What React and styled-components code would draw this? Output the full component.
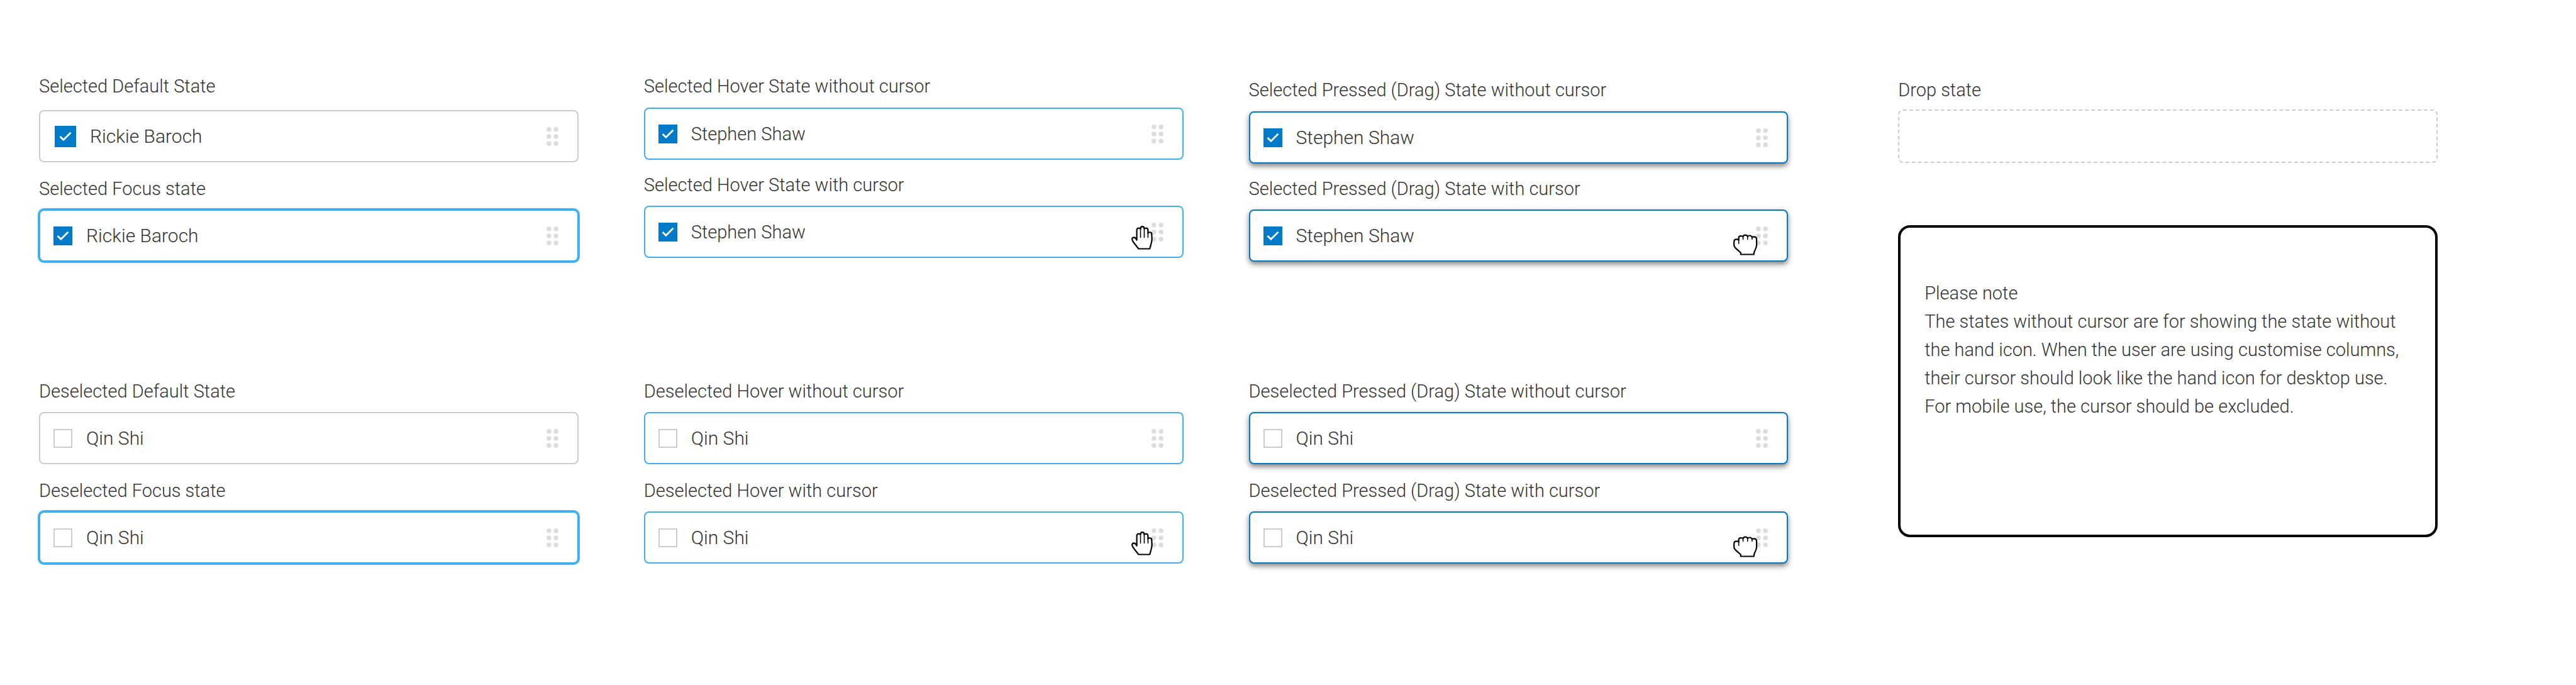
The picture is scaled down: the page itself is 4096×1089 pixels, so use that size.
import React, { useState } from "react";
import styled, { createGlobalStyle, css } from "styled-components";

const GlobalStyle = createGlobalStyle`
  * {
    box-sizing: border-box;
  }
  body {
    margin: 0;
    background-color: #fff;
    color: #333;
    font-family: Roboto, "Liberation Sans", sans-serif;
    font-size: 29px;
    font-weight: 350;
    line-height: 40px;
  }
`;

const Page = styled.main`
  display: flex;
  align-items: flex-start;
  gap: 175px;
  padding: 117px 220px 80px 62px;
`;
const States = styled.div`
  flex: 3 1 208px;
  display: grid;
  grid-template-columns: repeat(3, minmax(0, 1fr));
  column-gap: 104px;
  row-gap: 186px;
`;
const Aside = styled.aside`
  flex: 1 1 0;
  min-width: 0;
  padding-top: 6px;
`;
const Group = styled.section`
  display: flex;
  flex-direction: column;
  gap: ${(props) => props.$gap || 22}px;
  padding-top: ${(props) => (props.$lowered ? 6 : 0)}px;
`;
const StateField = styled.div`
  display: flex;
  flex-direction: column;
  gap: ${(props) => props.$gap || 13}px;
`;
const StateTitle = styled.h2`
  margin: 0;
  font-size: 29px;
  font-weight: 350;
  line-height: 40px;
`;

const borders = {
  default: css`
    border-color: #ccc;
  `,
  focus: css`
    border-color: #3fafef;
    box-shadow: 0 0 1px 2px #3fafef;
  `,
  hover: css`
    border-color: #3fafef;
  `,
  pressed: css`
    border-color: #007ac9;
    box-shadow: 0 4px 8px rgba(0, 0, 0, 0.5);
  `,
};

const Row = styled.div`
  position: relative;
  display: flex;
  align-items: center;
  height: 83px;
  padding: 0 30px 0 ${(props) => (props.$large ? 23 : 21)}px;
  border: 2px solid;
  border-radius: 8px;
  background-color: #fff;
  ${(props) => borders[props.$state]}
`;
const RowLabel = styled.label`
  flex: 1;
  display: flex;
  align-items: center;
  gap: 22px;
  font-size: ${(props) => (props.$small ? 29 : 30)}px;
`;
const CheckWrap = styled.span`
  display: grid;
  place-items: center;

  > * {
    grid-area: 1 / 1;
  }
`;
const CheckInput = styled.input`
  appearance: none;
  width: ${(props) => (props.$large ? 34 : 30)}px;
  height: ${(props) => (props.$large ? 34 : 30)}px;
  margin: 0;
  border: 2px solid #ccc;
  background-color: #fff;

  &:checked {
    border-color: #007ac9;
    background-color: #007ac9;
  }
`;
const TickIcon = styled.svg`
  width: 30px;
  height: 30px;
  pointer-events: none;
`;
const HandleButton = styled.button`
  display: flex;
  padding: 0;
  border: none;
  background: none;
  cursor: grab;
`;
const HandleIcon = styled.svg`
  width: 19px;
  height: 30px;
  fill: #ddd;
`;
const OpenHandIcon = styled.svg`
  position: absolute;
  top: 29px;
  right: 46px;
  width: 36px;
  height: 40px;
  pointer-events: none;
`;
const ClosedHandIcon = styled.svg`
  position: absolute;
  top: 36px;
  right: 46px;
  width: 40px;
  height: 36px;
  pointer-events: none;
`;
const DropZone = styled.div`
  height: 85px;
  margin-top: 11px;
  border: 2px dashed #ccc;
  border-radius: 8px;
`;
const Note = styled.div`
  margin-top: 99px;
  padding: 82px 36px 181px 38px;
  border: 4px solid #000;
  border-radius: 19px;
  line-height: 45px;
`;
const NoteText = styled.p`
  margin: 0;
`;

const OpenHand = () => (
  <OpenHandIcon
    viewBox="154 152 114 128"
    fill="#fff"
    stroke="#000"
    strokeWidth="7"
    strokeLinejoin="round"
    strokeLinecap="round"
  >
    <path d="M193 272 L168 240 Q160 229 160 222 Q162 214 171 214 Q179 216 184 228 L184 178 Q184 167 194 167 Q200 167 203 171 Q203 159 212 159 Q222 159 222 171 Q225 167 231 167 Q241 167 241 178 L241 193 Q243 188 250 188 Q260 188 260 198 L261 224 Q261 235 256 250 L250 272 Z" />
    <path d="M203 171 V214 M222 171 V214 M241 190 V214" fill="none" strokeWidth="5" />
  </OpenHandIcon>
);

const ClosedHand = () => (
  <ClosedHandIcon
    viewBox="146 194 128 115"
    fill="#fff"
    stroke="#000"
    strokeWidth="7"
    strokeLinejoin="round"
    strokeLinecap="round"
  >
    <path d="M187 301 V292 L164 272 Q153 262 153 252 V237 Q153 224 166 224 Q172 224 177 228 V217 Q177 207 188 207 Q195 207 199 211 Q201 202 210 202 Q219 202 222 210 Q225 205 233 205 Q242 205 245 214 Q248 211 256 211 Q268 212 268 225 V252 Q268 262 260 279 Q254 290 254 301 Z" />
    <path d="M177 226 V246 M199 211 V224 M222 210 V224 M245 213 V224" fill="none" strokeWidth="5" />
  </ClosedHandIcon>
);

const Item = ({ name, state, checked, large, small, cursor }) => {
  const [isChecked, setIsChecked] = useState(checked);

  return (
    <Row $state={state} $large={large}>
      <RowLabel $small={small}>
        <CheckWrap>
          <CheckInput
            type="checkbox"
            $large={large}
            checked={isChecked}
            onChange={(e) => setIsChecked(e.target.checked)}
          />
          {isChecked && (
            <TickIcon viewBox="0 0 32 32" fill="none" stroke="#fff" strokeWidth="3">
              <path d="M7 16 L12.7 21.7 L25 9.3" />
            </TickIcon>
          )}
        </CheckWrap>
        {name}
      </RowLabel>
      <HandleButton type="button" aria-label={`Move ${name}`}>
        <HandleIcon viewBox="0 0 20 32">
          {[4, 16, 28].map((y) => (
            <React.Fragment key={y}>
              <circle cx="4" cy={y} r="4" />
              <circle cx="16" cy={y} r="4" />
            </React.Fragment>
          ))}
        </HandleIcon>
      </HandleButton>
      {cursor === "open" && <OpenHand />}
      {cursor === "closed" && <ClosedHand />}
    </Row>
  );
};

const groups = [
  {
    id: "selected-default",
    items: [
      { title: "Selected Default State", titleGap: 18, name: "Rickie Baroch", state: "default", checked: true, large: true },
      { title: "Selected Focus state", name: "Rickie Baroch", state: "focus", checked: true },
    ],
  },
  {
    id: "selected-hover",
    gap: 20,
    items: [
      { title: "Selected Hover State without cursor", titleGap: 14, name: "Stephen Shaw", state: "hover", checked: true, small: true },
      { title: "Selected Hover State with cursor", name: "Stephen Shaw", state: "hover", checked: true, small: true, cursor: "open" },
    ],
  },
  {
    id: "selected-pressed",
    gap: 20,
    lowered: true,
    items: [
      { title: "Selected Pressed (Drag) State without cursor", titleGap: 14, name: "Stephen Shaw", state: "pressed", checked: true },
      { title: "Selected Pressed (Drag) State with cursor", name: "Stephen Shaw", state: "pressed", checked: true, cursor: "closed" },
    ],
  },
  {
    id: "deselected-default",
    items: [
      { title: "Deselected Default State", name: "Qin Shi", state: "default", checked: false },
      { title: "Deselected Focus state", name: "Qin Shi", state: "focus", checked: false },
    ],
  },
  {
    id: "deselected-hover",
    items: [
      { title: "Deselected Hover without cursor", name: "Qin Shi", state: "hover", checked: false },
      { title: "Deselected Hover with cursor", name: "Qin Shi", state: "hover", checked: false, cursor: "open" },
    ],
  },
  {
    id: "deselected-pressed",
    items: [
      { title: "Deselected Pressed (Drag) State without cursor", name: "Qin Shi", state: "pressed", checked: false },
      { title: "Deselected Pressed (Drag) State with cursor", name: "Qin Shi", state: "pressed", checked: false, cursor: "closed" },
    ],
  },
];

const App = () => {
  return (
    <>
      <GlobalStyle />
      <Page>
        <States>
          {groups.map((group) => (
            <Group key={group.id} $gap={group.gap} $lowered={group.lowered}>
              {group.items.map(({ title, titleGap, ...item }) => (
                <StateField key={title} $gap={titleGap}>
                  <StateTitle>{title}</StateTitle>
                  <Item {...item} />
                </StateField>
              ))}
            </Group>
          ))}
        </States>
        <Aside>
          <StateTitle>Drop state</StateTitle>
          <DropZone />
          <Note>
            <NoteText>Please note</NoteText>
            <NoteText>
              The states without cursor are for showing the state without the
              hand icon. When the user are using customise columns, their
              cursor should look like the hand icon for desktop use. For mobile
              use, the cursor should be excluded.
            </NoteText>
          </Note>
        </Aside>
      </Page>
    </>
  );
};

export default App;
